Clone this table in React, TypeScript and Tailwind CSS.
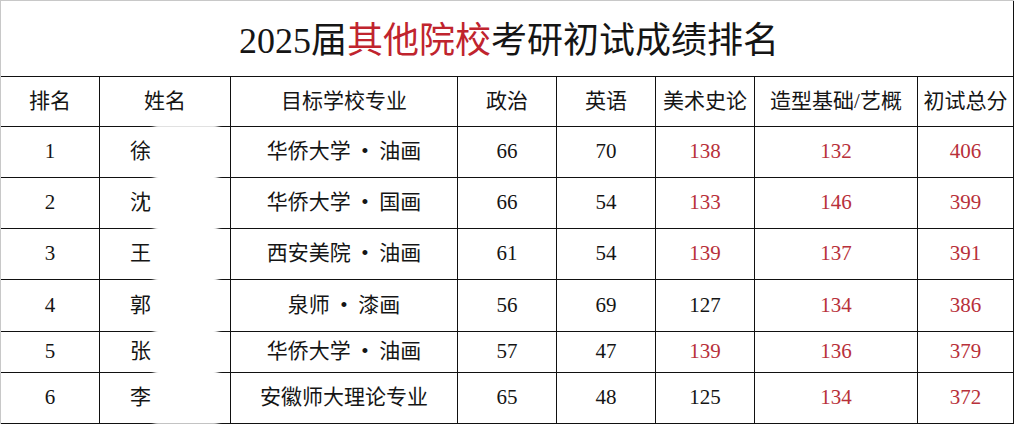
const RED = "text-[#b8303a]";

type Row = {
  rank: string;
  name: string;
  school: string;
  politics: string;
  english: string;
  history: string;
  history_red: boolean;
  base: string;
  total: string;
  h: string;
};

const rows: Row[] = [
  { rank: "1", name: "徐", school: "华侨大学\u2002•\u2002油画", politics: "66", english: "70", history: "138", history_red: true, base: "132", total: "406", h: "h-[51px]" },
  { rank: "2", name: "沈", school: "华侨大学\u2002•\u2002国画", politics: "66", english: "54", history: "133", history_red: true, base: "146", total: "399", h: "h-[51px]" },
  { rank: "3", name: "王", school: "西安美院\u2002•\u2002油画", politics: "61", english: "54", history: "139", history_red: true, base: "137", total: "391", h: "h-[51px]" },
  { rank: "4", name: "郭", school: "泉师\u2002•\u2002漆画", politics: "56", english: "69", history: "127", history_red: false, base: "134", total: "386", h: "h-[52px]" },
  { rank: "5", name: "张", school: "华侨大学\u2002•\u2002油画", politics: "57", english: "47", history: "139", history_red: true, base: "136", total: "379", h: "h-[41px]" },
  { rank: "6", name: "李", school: "安徽师大理论专业", politics: "65", english: "48", history: "125", history_red: false, base: "134", total: "372", h: "h-[51px]" },
];

const cols = "grid grid-cols-[99px_131px_227px_99px_99px_99px_163px_96px]";
const cell = "flex items-center justify-center border-r border-[#111]";

export default function App() {
  return (
    <div className="w-[1017px] h-[424px] bg-white text-[#151515] font-['Liberation_Serif','Noto_Sans_CJK_SC',serif]">
      <div className="relative w-[1014px] h-[424px] border-l border-t border-[#c8c8c8]">
        <div className="h-[76px] border-b border-[#111] border-r flex items-center justify-center text-[36px] leading-none pt-[4px]">
          <span className="pl-[4px]">
            2025届<span className="text-[#c0242e]">其他院校</span>考研初试成绩排名
          </span>
        </div>

        <div className={`${cols} h-[50px] border-b border-[#111] text-[21px]`}>
          <div className={cell}>排名</div>
          <div className={cell}>姓名</div>
          <div className={cell}>目标学校专业</div>
          <div className={cell}>政治</div>
          <div className={cell}>英语</div>
          <div className={cell}>美术史论</div>
          <div className={cell}>造型基础/艺概</div>
          <div className={cell}>初试总分</div>
        </div>

        {rows.map((r) => (
          <div key={r.rank} className={`${cols} ${r.h} border-b border-[#111] text-[21px]`}>
            <div className={cell}>{r.rank}</div>
            <div className={`${cell} !justify-start pl-[30px]`}>{r.name}</div>
            <div className={cell}>{r.school}</div>
            <div className={cell}>{r.politics}</div>
            <div className={cell}>{r.english}</div>
            <div className={`${cell} ${r.history_red ? RED : ""}`}>{r.history}</div>
            <div className={`${cell} ${RED}`}>{r.base}</div>
            <div className={`${cell} ${RED}`}>{r.total}</div>
          </div>
        ))}

        {/* blurred-out names */}
        <div className="absolute left-[153px] top-[123px] w-[64px] h-[301px] bg-white blur-[2px]" />
      </div>
    </div>
  );
}
